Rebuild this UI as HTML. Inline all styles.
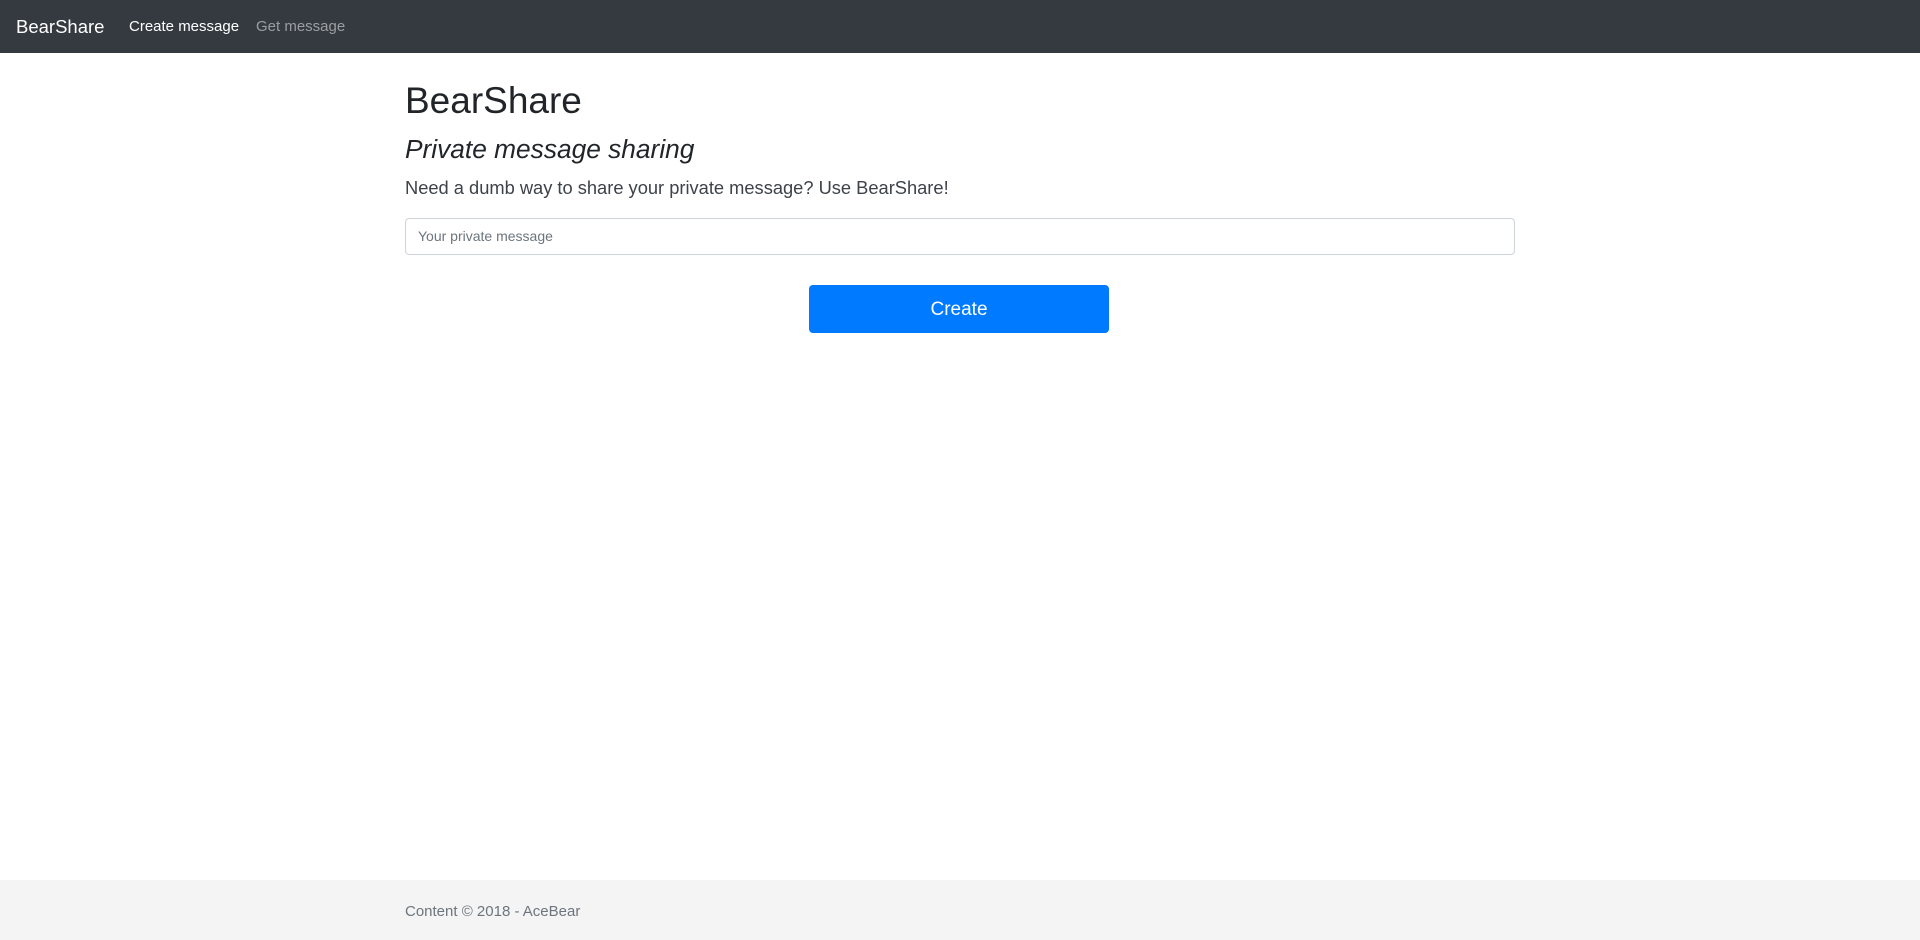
<!DOCTYPE html>
<html><head><meta charset="utf-8"><style>
*{box-sizing:border-box;margin:0;padding:0}
body{width:1920px;height:940px;position:relative;font-family:"Liberation Sans",sans-serif;color:#212529;background:#fff;overflow:hidden}
.nav{position:absolute;left:0;top:0;width:1920px;height:53px;background:#343a40}
.nav span{position:absolute;top:0;line-height:53px;white-space:nowrap}
.c{position:absolute;left:405px;width:1110px}
</style></head><body>
<div class="nav">
<span style="left:16px;font-size:18.5px;color:#fff">BearShare</span>
<span style="left:129px;font-size:15px;color:#fff">Create message</span>
<span style="left:256px;font-size:15px;color:rgba(255,255,255,.5)">Get message</span>
</div>
<div class="c" style="top:77px;font-size:37px;line-height:48px">BearShare</div>
<div class="c" style="top:132px;font-size:26.3px;line-height:34px;font-style:italic">Private message sharing</div>
<div class="c" style="top:173px;font-size:18.3px;line-height:30px;color:#3d4349">Need a dumb way to share your private message? Use BearShare!</div>
<div class="c" style="top:218px;height:37px;border:1px solid #ced4da;border-radius:4px;font-size:14px;line-height:35px;padding-left:12px;color:#6c757d">Your private message</div>
<div style="position:absolute;left:809px;top:285px;width:300px;height:48px;background:#007bff;border-radius:4px;color:#fff;font-size:19px;line-height:50px;text-align:center">Create</div>
<div style="position:absolute;left:0;top:880px;width:1920px;height:60px;background:#f4f4f4"></div>
<div class="c" style="top:900px;font-size:15px;line-height:24px;color:#6c757d">Content © 2018 - AceBear</div>
</body></html>
